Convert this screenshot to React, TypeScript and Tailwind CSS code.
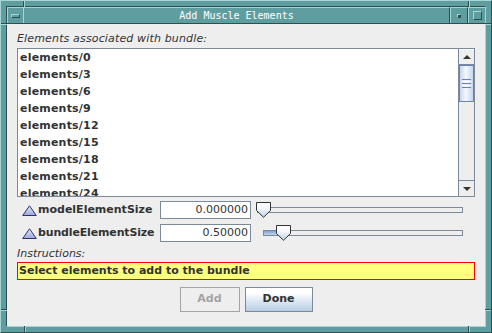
import React from "react";

const rows = ["elements/0", "elements/3", "elements/6", "elements/9", "elements/12", "elements/15", "elements/18", "elements/21", "elements/24"];

function Tri() {
  return (
    <svg width="15" height="11" viewBox="0 0 15 11" className="block">
      <defs>
        <linearGradient id="tg" x1="0" y1="0" x2="0" y2="1">
          <stop offset="0" stopColor="#e8ecf8" />
          <stop offset="1" stopColor="#9aa6d6" />
        </linearGradient>
      </defs>
      <path d="M7.5 0.8 L14.3 10.5 L0.7 10.5 Z" fill="url(#tg)" stroke="#2e2e7a" strokeWidth="1" />
    </svg>
  );
}

function Thumb() {
  return (
    <svg width="15" height="16" viewBox="0 0 15 16" className="block">
      <defs>
        <linearGradient id="th" x1="0" y1="0" x2="0" y2="1">
          <stop offset="0" stopColor="#ffffff" />
          <stop offset="0.4" stopColor="#f4f8fc" />
          <stop offset="1" stopColor="#b8cfe5" />
        </linearGradient>
      </defs>
      <path d="M0.5 0.5 H14.5 V8.5 L7.5 15.3 L0.5 8.5 Z" fill="url(#th)" stroke="#333333" strokeWidth="1" />
    </svg>
  );
}

export default function App() {
  const ui = { fontFamily: '"DejaVu Sans", sans-serif' };
  return (
    <div
      className="relative w-[492px] h-[333px] box-border bg-[#5f9ea0] border border-t-[#a8d4d4] border-l-[#a8d4d4] border-b-[#2f4f4f] border-r-[#2f4f4f] p-[5px]"
      style={ui}
    >
      <div className="w-full h-full box-border flex flex-col border border-t-[#2f4f4f] border-l-[#2f4f4f] border-b-[#a8d4d4] border-r-[#a8d4d4]">
        {/* title bar */}
        <div className="h-[17px] flex border-b border-b-[#2f4f4f] box-border">
          <div className="w-[17px] h-[16px] box-border border-t border-l border-t-[#a8d4d4] border-l-[#a8d4d4] border-r border-r-[#a8d4d4] flex items-center justify-center">
            <div className="w-[9px] h-[4px] box-border border border-t-[#a8d4d4] border-l-[#a8d4d4] border-b-[#2f4f4f] border-r-[#2f4f4f]" />
          </div>
          <div
            className="flex-1 h-[16px] flex items-center justify-center text-white text-[10px] leading-[16px] border-t border-t-[#a8d4d4] border-r border-r-[#2f4f4f]"
            style={{ fontFamily: '"DejaVu Sans Mono", monospace' }}
          >
            Add Muscle Elements
          </div>
          <div className="w-[18px] h-[16px] box-border border-t border-l border-t-[#a8d4d4] border-l-[#a8d4d4] border-r border-r-[#2f4f4f] flex items-center justify-center">
            <div className="w-[4px] h-[4px] box-border border border-t-[#a8d4d4] border-l-[#a8d4d4] border-b-[#2f4f4f] border-r-[#2f4f4f] bg-[#2f4f4f]" />
          </div>
          <div className="w-[17px] h-[16px] box-border border-t border-l border-t-[#a8d4d4] border-l-[#a8d4d4] flex items-center justify-center">
            <div className="w-[9px] h-[9px] box-border border border-t-[#a8d4d4] border-l-[#a8d4d4] border-b-[#2f4f4f] border-r-[#2f4f4f]" />
          </div>
        </div>

        {/* content */}
        <div className="flex-1 bg-[#eeeeee] px-[10px] pt-[7px] flex flex-col">
          <div className="h-[17px] text-[11px] leading-[16px] italic text-[#333333] tracking-[0.15px]">Elements associated with bundle:</div>

          <div className="h-[149px] box-border border border-[#7a8a99] bg-white flex">
            <div className="flex-1 overflow-hidden">
              {rows.map((r) => (
                <div key={r} className="h-[17px] pl-[2px] text-[11px] leading-[17px] font-bold text-[#333333] whitespace-nowrap tracking-[0.2px]">
                  {r}
                </div>
              ))}
            </div>
            <div className="w-[16px] box-border border-l border-l-[#7a8a99] bg-[#eeeeee] flex flex-col">
              <div className="h-[16px] box-border border-b border-b-[#7a8a99] border-t border-t-white flex items-center justify-center">
                <svg width="8" height="4" viewBox="0 0 8 4" className="block"><path d="M4 0 L8 4 L0 4 Z" fill="#333333" /></svg>
              </div>
              <div className="h-[37px] box-border border border-[#6382bf] bg-[linear-gradient(to_right,#c4d6ee,#f5f8fc_45%,#c4d6ee)] flex flex-col items-center justify-center gap-[1px]">
                <div className="w-[9px] h-[1px] bg-[#6382bf]" />
                <div className="w-[9px] h-[1px] bg-white" />
                <div className="w-[9px] h-[1px] bg-[#6382bf]" />
                <div className="w-[9px] h-[1px] bg-white" />
                <div className="w-[9px] h-[1px] bg-[#6382bf]" />
              </div>
              <div className="flex-1" />
              <div className="h-[16px] box-border border-t border-t-[#7a8a99] flex items-center justify-center">
                <svg width="8" height="4" viewBox="0 0 8 4" className="block"><path d="M0 0 L8 0 L4 4 Z" fill="#333333" /></svg>
              </div>
            </div>
          </div>

          {/* row 1 */}
          <div className="mt-[4px] h-[18px] flex items-center">
            <div className="w-[5px]" />
            <Tri />
            <div className="w-[123px] pl-[1px] text-[11px] font-bold text-[#333333] whitespace-nowrap">modelElementSize</div>
            <div className="w-[91px] h-[18px] box-border border border-[#7a8a99] bg-white text-right pr-[2px] text-[11px] leading-[16px] text-[#333333]">0.000000</div>
            <div className="ml-[5px] relative w-[207px] h-[18px]">
              <div className="absolute left-[1px] top-[6px] w-[206px] h-[6px] box-border border border-[#7a8a99] bg-[#eeeeee]" />
              <div className="absolute left-0 top-[1px]"><Thumb /></div>
            </div>
          </div>

          {/* row 2 */}
          <div className="mt-[5px] h-[18px] flex items-center">
            <div className="w-[5px]" />
            <Tri />
            <div className="w-[123px] pl-[1px] text-[11px] font-bold text-[#333333] whitespace-nowrap tracking-[-0.15px]">bundleElementSize</div>
            <div className="w-[91px] h-[18px] box-border border border-[#7a8a99] bg-white text-right pr-[2px] text-[11px] leading-[16px] text-[#333333]">0.50000</div>
            <div className="ml-[5px] relative w-[207px] h-[18px]">
              <div className="absolute left-[7px] top-[6px] w-[200px] h-[6px] box-border border border-[#7a8a99] bg-[#eeeeee]" />
              <div className="absolute left-[8px] top-[7px] w-[18px] h-[4px] bg-[linear-gradient(to_bottom,#7f9fd6,#c4d6ee)]" />
              <div className="absolute left-[20px] top-[1px]"><Thumb /></div>
            </div>
          </div>

          <div className="mt-[4px] h-[16px] text-[11px] leading-[16px] italic text-[#333333]">Instructions:</div>
          <div className="h-[18px] box-border border border-[#ff0000] bg-[#ffff80] pl-[1px] text-[11px] leading-[16px] font-bold text-[#333333] whitespace-nowrap">
            Select elements to add to the bundle
          </div>

          <div className="mt-[7px] flex justify-center gap-[5px]">
            <div className="w-[60px] h-[25px] box-border border border-[#a3a3a3] bg-[#eeeeee] flex items-center justify-center text-[11px] font-bold text-[#a3a3a3]">Add</div>
            <div className="w-[68px] h-[25px] box-border border border-[#7a8a99] bg-[linear-gradient(to_bottom,#ffffff_0%,#ffffff_20%,#dfe8f3_55%,#b9cde3_100%)] flex items-center justify-center text-[11px] font-bold text-[#333333]">Done</div>
          </div>
        </div>
      </div>

      {/* frame corner grooves */}
      <div className="absolute left-[22px] top-0 w-[1px] h-[6px] bg-[#2f4f4f]" />
      <div className="absolute left-[23px] top-0 w-[1px] h-[6px] bg-[#a8d4d4]" />
      <div className="absolute left-[467px] top-0 w-[1px] h-[6px] bg-[#2f4f4f]" />
      <div className="absolute left-[468px] top-0 w-[1px] h-[6px] bg-[#a8d4d4]" />
      <div className="absolute left-0 top-[22px] w-[6px] h-[1px] bg-[#2f4f4f]" />
      <div className="absolute left-0 top-[23px] w-[6px] h-[1px] bg-[#a8d4d4]" />
      <div className="absolute right-0 top-[22px] w-[6px] h-[1px] bg-[#2f4f4f]" />
      <div className="absolute right-0 top-[23px] w-[6px] h-[1px] bg-[#a8d4d4]" />
      <div className="absolute left-0 top-[308px] w-[6px] h-[1px] bg-[#2f4f4f]" />
      <div className="absolute left-0 top-[309px] w-[6px] h-[1px] bg-[#a8d4d4]" />
      <div className="absolute right-0 top-[308px] w-[6px] h-[1px] bg-[#2f4f4f]" />
      <div className="absolute right-0 top-[309px] w-[6px] h-[1px] bg-[#a8d4d4]" />
      <div className="absolute left-[23px] bottom-0 w-[1px] h-[6px] bg-[#2f4f4f]" />
      <div className="absolute left-[24px] bottom-0 w-[1px] h-[6px] bg-[#a8d4d4]" />
      <div className="absolute left-[467px] bottom-0 w-[1px] h-[6px] bg-[#2f4f4f]" />
      <div className="absolute left-[468px] bottom-0 w-[1px] h-[6px] bg-[#a8d4d4]" />
    </div>
  );
}
